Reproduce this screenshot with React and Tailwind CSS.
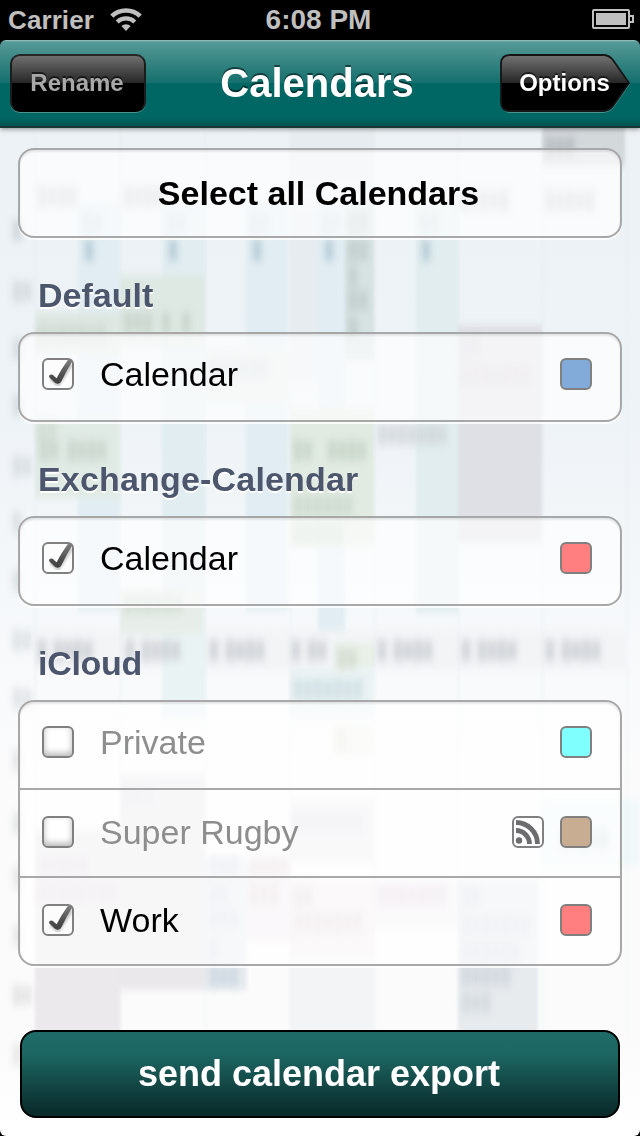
import { useState } from "react"
import clsx from "clsx"

const GROUPS = [
  {
    title: "Default",
    items: [{ id: "default", name: "Calendar", color: "bg-[#82abd9]", checked: true }],
  },
  {
    title: "Exchange-Calendar",
    titleClass: "tracking-[0.18px]",
    items: [{ id: "exchange", name: "Calendar", color: "bg-[#ff7e7f]", checked: true }],
  },
  {
    title: "iCloud",
    titleClass: "-tracking-[0.3px]",
    items: [
      { id: "private", name: "Private", color: "bg-[#80ffff]", checked: false },
      { id: "rugby", name: "Super Rugby", color: "bg-[#c8ad92]", checked: false, feed: true },
      { id: "work", name: "Work", color: "bg-[#ff7e7f]", checked: true },
    ],
  },
]

// x, y, width, height, fill
const EVENTS = [
  [542, 120, 83, 46, "#d3d8db"],
  [290, 128, 84, 60, "#e6ecf0"],
  [78, 205, 42, 405, "#e1edf2"],
  [162, 205, 43, 405, "#e1edf1"],
  [246, 205, 42, 405, "#e1edf2"],
  [318, 205, 27, 425, "#e1edf3"],
  [416, 205, 42, 408, "#e1edef"],
  [290, 205, 28, 180, "#e6ecf0"],
  [345, 205, 29, 155, "#d7e2e2"],
  [162, 610, 43, 110, "#eaf3f4"],
  [35, 312, 85, 42, "#dfe8e3"],
  [120, 275, 85, 72, "#dee9e3"],
  [205, 345, 85, 60, "#e8eeee"],
  [35, 420, 85, 78, "#e1ebe5"],
  [290, 408, 84, 138, "#e1ebe2"],
  [120, 590, 83, 44, "#e7eee9"],
  [334, 643, 40, 24, "#e9f0e8"],
  [290, 668, 84, 50, "#ebf3f4"],
  [332, 725, 42, 30, "#f2f5ef"],
  [458, 325, 84, 218, "#dfe0e6"],
  [120, 775, 85, 215, "#ebe8ec"],
  [35, 830, 85, 205, "#ebe9ec"],
  [290, 800, 84, 62, "#ededf0"],
  [205, 858, 42, 132, "#e8ecf0"],
  [247, 862, 43, 80, "#f1ecef"],
  [290, 880, 84, 80, "#f2edef"],
  [374, 880, 84, 50, "#f3f0f3"],
  [290, 955, 84, 80, "#f3f4f5"],
  [458, 880, 80, 160, "#e7ebee"],
  [541, 800, 99, 66, "#f1f8f9"],
]

// x, y, number of strokes, fill
const NOTES = [
  [38, 186, 4, "#bfc5c8"], [124, 186, 4, "#bfc5c8"], [460, 190, 5, "#c5cacd"], [546, 190, 5, "#bfc5c8"],
  [546, 137, 3, "#aeb5b9"],
  [83, 212, 2, "#c9d5db"], [167, 212, 2, "#c9d5db"], [250, 212, 2, "#c9d5db"], [322, 212, 2, "#c9d5db"], [420, 212, 2, "#c9d5db"],
  [85, 240, 1, "#a9c1cf"], [169, 240, 1, "#a9c1cf"], [253, 240, 1, "#a9c1cf"], [325, 240, 1, "#a9c1cf"], [422, 240, 1, "#a9c1cf"],
  [349, 212, 2, "#bccaca"], [349, 240, 2, "#b9c8c7"], [349, 266, 1, "#bccac8"], [349, 290, 2, "#b9c8c7"], [349, 317, 1, "#b9c8c7"],
  [124, 312, 3, "#c1cfc5"], [162, 312, 1, "#c1cfc5"], [182, 312, 1, "#c1cfc5"], [38, 324, 7, "#cbd6cd"],
  [210, 358, 6, "#ccd4d5"], [462, 335, 2, "#d2cbd5"], [462, 364, 7, "#d0c8d2"],
  [40, 440, 2, "#c2cfc5"], [68, 440, 4, "#c2cfc5"], [294, 440, 2, "#c2cfc2"], [328, 440, 4, "#c2cfc2"], [38, 420, 2, "#cbd8cd"],
  [378, 424, 3, "#ccd2d6"], [408, 424, 4, "#ccd2d6"],
  [294, 495, 6, "#cad6c9"], [294, 524, 5, "#cad6c9"], [124, 592, 6, "#c9d6cb"],
  [38, 640, 1, "#c6cacd"], [54, 640, 4, "#c6cacd"], [126, 640, 1, "#c6cacd"], [142, 640, 4, "#c6cacd"],
  [210, 640, 1, "#c6cacd"], [226, 640, 4, "#c6cacd"], [292, 640, 1, "#c6cacd"], [308, 640, 2, "#c6cacd"],
  [378, 640, 1, "#c6cacd"], [394, 640, 4, "#c6cacd"], [462, 640, 1, "#c6cacd"], [478, 640, 4, "#c6cacd"],
  [546, 640, 1, "#c6cacd"], [562, 640, 4, "#c6cacd"],
  [338, 648, 2, "#cdd6c9"], [294, 679, 7, "#cbdbe0"], [338, 730, 1, "#dce2d3"],
  [124, 784, 3, "#dcd8dd"], [294, 812, 7, "#dad7dd"], [40, 855, 5, "#dcd2da"], [38, 882, 8, "#dcd2da"],
  [210, 855, 3, "#cdd6e0"], [250, 855, 4, "#dccfd6"], [250, 884, 3, "#dccfd6"], [294, 886, 2, "#dccfd6"], [294, 912, 7, "#dccfd6"],
  [210, 884, 2, "#cdd6e0"], [210, 908, 3, "#cdd6e0"], [210, 938, 1, "#cdd6e0"], [210, 966, 3, "#c5d2dc"],
  [378, 885, 7, "#dacbd8"], [462, 886, 2, "#cdd3df"], [462, 915, 7, "#cdd3df"], [462, 942, 6, "#cdd3df"],
  [462, 965, 5, "#cbd2d9"], [462, 992, 3, "#cfd5db"], [560, 828, 5, "#ccd8dc"],
  [13, 220, 1, "#c5ccd1"], [13, 281, 2, "#cdd3d8"], [13, 338, 1, "#ced4d8"], [13, 395, 1, "#ced4d8"], [13, 456, 2, "#d2d8dc"],
  [13, 512, 1, "#d2d7da"], [13, 570, 1, "#d2d7da"], [13, 630, 2, "#d6dbde"], [13, 688, 2, "#dadee0"], [13, 750, 1, "#dcdfe0"],
  [13, 812, 1, "#dcdfe0"], [13, 867, 1, "#dfe0e1"], [13, 925, 1, "#dfe0e1"], [13, 985, 2, "#dcdcdc"], [13, 1044, 1, "#e0e0e0"],
]

const Backdrop = () => (
  <svg className="absolute inset-0 h-full w-full" viewBox="0 0 640 1136" aria-hidden="true">
    <defs>
      <linearGradient id="paper" x1="0" y1="0" x2="0" y2="1">
        <stop offset="0" stopColor="#ecf1f4" />
        <stop offset=".37" stopColor="#eef3f7" />
        <stop offset=".6" stopColor="#f8fafb" />
        <stop offset=".7" stopColor="#fbfbfb" />
        <stop offset=".92" stopColor="#fbfbfb" />
        <stop offset="1" stopColor="#fff" />
      </linearGradient>
      <filter id="soft" x="-5%" y="-5%" width="110%" height="110%" colorInterpolationFilters="sRGB">
        <feGaussianBlur stdDeviation="1.8 3.5" />
      </filter>
      <filter id="softer" x="-5%" y="-5%" width="110%" height="110%" colorInterpolationFilters="sRGB">
        <feGaussianBlur stdDeviation="3.2 4.5" />
      </filter>
    </defs>
    <rect width="640" height="1136" fill="url(#paper)" />
    <g filter="url(#soft)">
      <rect x="35" y="630" width="591" height="40" fill="#f2f4f6" />
      {EVENTS.map(([x, y, w, h, fill], i) => (
        <rect key={i} x={x} y={y} width={w} height={h} fill={fill} />
      ))}
      {[35, 120, 205, 290, 374, 458, 542, 627].map((x) => (
        <rect key={x} x={x} y="128" width="1" height="905" fill="#d9e1e6" opacity=".35" />
      ))}
    </g>
    <g filter="url(#softer)">
      {NOTES.map(([x, y, count, fill]) =>
        Array.from({ length: count }, (_, i) => (
          <rect key={`${x}-${y}-${i}`} x={x + i * 10} y={y + (i % 2)} width="8" height={21 - (i % 2) * 2} fill={fill} opacity=".75" />
        )),
      )}
    </g>
  </svg>
)

const WifiIcon = () => (
  <svg className="ml-4 mt-2 h-6 w-8" viewBox="0 0 32 24" fill="none" stroke="#bfbfbf">
    <path d="M1.800 8.200a20.500 20.500 0 0 1 28.400 0" strokeWidth="4.600" />
    <path d="M7.200 14a12.600 12.600 0 0 1 17.600 0" strokeWidth="4.200" />
    <path d="M16 23l-4.600-4.900a6.500 6.500 0 0 1 9.200 0z" fill="#bfbfbf" stroke="none" />
  </svg>
)

const BatteryIcon = () => (
  <svg className="mt-[9px] h-5 w-[42px]" viewBox="0 0 42 20" fill="none">
    <rect x="1" y="1" width="36" height="18" rx="1" stroke="#bfbfbf" strokeWidth="2" />
    <rect x="4" y="4" width="30" height="12" fill="#bfbfbf" />
    <path d="M38 7h3v6h-3" stroke="#bfbfbf" strokeWidth="2" />
  </svg>
)

const StatusBar = () => (
  <div className="grid h-10 grid-cols-3 bg-black font-bold text-[#bfbfbf]">
    <div className="flex pl-2">
      <span className="text-[26px] leading-10 tracking-[0.1px]">Carrier</span>
      <WifiIcon />
    </div>
    <span className="pr-[3px] text-center text-[28px] leading-10">6:08 PM</span>
    <div className="flex justify-end pr-[6px]">
      <BatteryIcon />
    </div>
  </div>
)

const NavBar = () => (
  <div className="bg-black">
    <header className="flex h-[88px] justify-between rounded-t-[6px] border-b-2 border-[#173634] bg-[linear-gradient(#9fc6c4_0px,#559a98_2px,#4c9390_8px,#146f6d_43px,#006764_43px,#006663_78px,#02524f_86px)] px-[10px] pt-[14px] shadow-[0_1px_5px_rgba(0,0,0,0.45)]">
      <button className="h-[58px] w-[136px] rounded-[10px] border-2 border-t-[#262626] border-x-[#1c1c1c] border-b-black bg-[linear-gradient(#747474,#262626_50%,#000_50%)] bg-origin-border pr-[2px] text-2xl font-bold text-[#a8a8a8] shadow-[0_1px_0_#4f9391] text-shadow-[0_-2px_0_rgba(0,0,0,0.55)]">
        Rename
      </button>
      <h1 className="pr-3 pt-[1px] text-[40px] font-bold leading-[56px] text-white text-shadow-[0_-2px_0_rgba(0,0,0,0.5)]">Calendars</h1>
      <button className="relative -mr-[1px] h-[58px] w-[131px]">
        <svg className="absolute left-0 top-0" width="131" height="60" viewBox="0 0 131 60">
          <defs>
            <linearGradient id="gloss" x1="0" y1="0" x2="0" y2="1">
              <stop offset="0" stopColor="#747474" />
              <stop offset=".5" stopColor="#262626" />
              <stop offset=".5" stopColor="#000" />
            </linearGradient>
          </defs>
          <path d="M2 52Q4 58.500 10 58.500H103Q109 58.500 113 54L129.500 30" fill="none" stroke="#4f9391" />
          <path
            d="M10 1H103Q109 1 113 6L129 29L113 52Q109 57 103 57H10Q1 57 1 48V10Q1 1 10 1Z"
            fill="url(#gloss)"
            stroke="#151515"
            strokeWidth="1.800"
            strokeLinejoin="round"
          />
        </svg>
        <span className="relative block pr-[2px] text-2xl font-bold leading-[58px] text-white text-shadow-[0_-2px_0_rgba(0,0,0,0.55)]">Options</span>
      </button>
    </header>
  </div>
)

const CheckBox = ({ checked }) => (
  <span
    className={clsx(
      "h-8 w-8 rounded-[6px] border-2 border-[#808080]",
      checked ? "bg-[#fcfcfc]" : "bg-white shadow-[inset_0_-3px_6px_rgba(0,0,0,0.28)]",
    )}
  >
    {checked && (
      <svg className="-mt-[2px] -ml-[2px] max-w-none" width="32" height="32" viewBox="0 0 32 32">
        <defs>
          <linearGradient id="tick" x1="0" y1="0" x2="0" y2="1">
            <stop offset="0" stopColor="#808080" />
            <stop offset=".6" stopColor="#505050" />
            <stop offset="1" stopColor="#404040" />
          </linearGradient>
          <filter id="tickShadow">
            <feGaussianBlur stdDeviation="1.2" />
          </filter>
        </defs>
        <path d="M9 20L16 26L29 6" fill="none" stroke="#000" strokeOpacity=".2" strokeWidth="5" filter="url(#tickShadow)" />
        <path
          d="M7.200 19.200Q6.800 16.800 9.200 16.600Q11 16.500 12.200 18.200L14.600 20.200Q19.500 10.500 25.500 2.400Q27 .800 29.300 1.600Q30.800 2.200 29.800 4.200Q24.500 12.500 19.700 22.800Q18.300 26 15.500 25.800Q13.500 25.600 12.300 24.200Z"
          fill="url(#tick)"
        />
      </svg>
    )}
  </span>
)

const FeedIcon = () => (
  <span className="mr-4 h-8 w-8 rounded-[6px] border-2 border-[#808080] bg-white">
    <svg width="28" height="28" viewBox="0 0 28 28" fill="none" stroke="#6d6d70">
      <circle cx="5" cy="22.500" r="3.200" fill="#6d6d70" stroke="none" />
      <path d="M2 12.500A13.500 13.500 0 0 1 15.500 26" strokeWidth="4.800" />
      <path d="M2 4.500A21.500 21.500 0 0 1 23.500 26" strokeWidth="4.800" />
    </svg>
  </span>
)

const Row = ({ item, checked, onToggle }) => (
  <li
    onClick={onToggle}
    className="flex h-[88px] cursor-pointer items-start border-t-2 border-[#a8a8a8] pl-[22px] pr-7 pt-[26px] first:h-[86px] first:border-t-0 first:pt-6"
  >
    <CheckBox checked={checked} />
    <span className={clsx("ml-[26px] flex-1 text-[34px] leading-8", checked ? "text-black" : "text-[#8e8e8e]")}>{item.name}</span>
    {item.feed && <FeedIcon />}
    <span className={clsx("h-8 w-8 rounded-[6px] border-2 border-[#808080]", item.color)} />
  </li>
)

const card =
  "rounded-[16px] border-2 border-[#a8a8a8] bg-white/65 bg-clip-padding shadow-[inset_0_2px_2px_rgba(0,0,0,0.09),0_2px_0_rgba(255,255,255,0.8)]"

export default function App() {
  const [selected, setSelected] = useState(
    GROUPS.flatMap((g) => g.items).filter((i) => i.checked).map((i) => i.id),
  )

  const toggle = (id) =>
    setSelected((prev) => (prev.includes(id) ? prev.filter((s) => s !== id) : [...prev, id]))

  const selectAll = () => setSelected(GROUPS.flatMap((g) => g.items).map((i) => i.id))

  return (
    <div className="h-[1136px] w-[640px] overflow-hidden bg-black font-['Liberation_Sans',Arial,sans-serif]">
      <div className="relative h-full overflow-hidden rounded-b-[6px]">
        <Backdrop />
        <div className="relative flex h-full flex-col">
          <StatusBar />
          <NavBar />
          <main className="flex-1 px-[18px] pt-5">
            <button onClick={selectAll} className={clsx(card, "block h-[90px] w-full pr-[3px] text-[34px] font-bold text-black")}>
              Select all Calendars
            </button>
            {GROUPS.map((group) => (
              <section key={group.title}>
                <h2
                  className={clsx(
                    "h-[94px] pl-5 pt-[37px] text-[34px] font-bold leading-10 text-[#4c566c] text-shadow-[0_2px_0_#fff]",
                    group.titleClass,
                  )}
                >
                  {group.title}
                </h2>
                <ul className={card}>
                  {group.items.map((item) => (
                    <Row key={item.id} item={item} checked={selected.includes(item.id)} onToggle={() => toggle(item.id)} />
                  ))}
                </ul>
              </section>
            ))}
          </main>
          <footer className="px-5 pb-[18px]">
            <button className="block h-[88px] w-full rounded-[16px] border-2 border-black bg-[linear-gradient(#1e6b67,#1d6763_25%,#0a2c2c_95%)] pr-[2px] text-4xl font-bold text-white">
              send calendar export
            </button>
          </footer>
        </div>
      </div>
    </div>
  )
}
